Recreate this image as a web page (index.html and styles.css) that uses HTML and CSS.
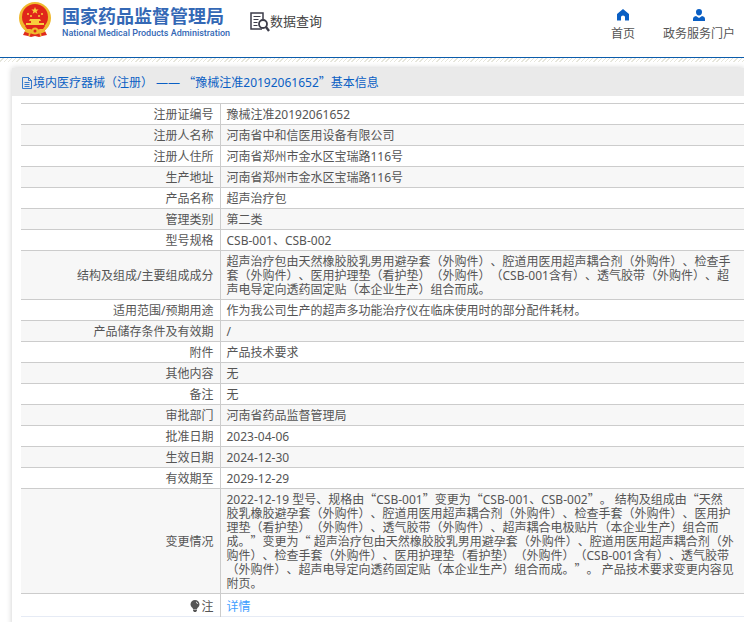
FILE: index.html
```html
<!DOCTYPE html>
<html lang="zh-CN">
	<head>
		<meta charset="UTF-8">
		<title>数据查询</title>
		<link rel="stylesheet" href="styles.css">
	</head>
	<body>
		<!--头部-->
		<header class="header">
			<a class="logo" href="#">
				<svg class="emblem" viewBox="0 0 32 36">
					<path d="M7 27L4 33l5 1 3 1 4-1 4 1 3-1 5-1-3-6z" fill="#e02a1c"/>
					<circle cx="16" cy="16" r="16" fill="#f0b92f"/>
					<circle cx="16" cy="15" r="13" fill="#e0261b"/>
					<path d="M16 5l1 2.500h2.600l-2 1.700.8 2.600L16 10.300l-2.400 1.500.8-2.600-2-1.700H15z" fill="#f8cf3c"/>
					<g fill="#f8cf3c"><circle cx="9" cy="12" r="1"/><circle cx="12" cy="14" r="1"/><circle cx="20" cy="14" r="1"/><circle cx="23" cy="12" r="1"/></g>
					<path d="M11 17h10l1 2h-2v2h5v2H7v-2h5v-2h-2z" fill="#f8cf3c"/>
					<path d="M6 24h20l-2 3H8z" fill="#e0261b"/>
					<circle cx="16" cy="29" r="3.500" fill="#f0b92f"/>
					<circle cx="16" cy="29" r="1.500" fill="#e0261b"/>
					<path d="M6 29l5 2-1 3M26 29l-5 2 1 3" fill="none" stroke="#f0b92f" stroke-width="1.500"/>
				</svg>
				<span class="logo-text">
					<strong>国家药品监督管理局</strong>
					<span class="en">National Medical Products Administration</span>
				</span>
			</a>
			<a class="search-title" href="#">
				<svg class="icon-data" viewBox="0 0 20 20" fill="none" stroke="#3d3d4a">
					<path d="M12 17H1V1h12v6" stroke-width="1.500"/>
					<path d="M3.500 4.500h7M3.500 7.500h5M3.500 10.500h4M3.500 13.500h4" stroke-width="1.200"/>
					<circle cx="13" cy="12" r="4" stroke-width="1.800"/>
					<path d="M16 15l3 4" stroke-width="2.400"/>
				</svg>
				<span>数据查询</span>
			</a>
			<nav class="nav">
				<a href="#">
					<svg viewBox="0 0 12 12"><path d="M6 0L0 5v6.500h4V8q0-1.500 2-1.500T8 8v3.500h4V5z" fill="#0a5fc4"/></svg>
					首页
				</a>
				<a href="#">
					<svg viewBox="0 0 12 12"><path d="M6 0a3 3 0 0 1 3 3c0 2-1.200 3.500-3 3.500S3 5 3 3a3 3 0 0 1 3-3zM3 7l3 2 3-2q3 .5 3 3v2H0v-2q0-2.500 3-3z" fill="#0a5fc4"/></svg>
					政务服务门户
				</a>
			</nav>
		</header>
		<div class="stripe"></div>

		<!--详情-->
		<main class="panel">
			<h1 class="panel-title">
				<svg class="icon-doc" viewBox="0 0 12 12" fill="none" stroke="#0a5fc4"><path d="M1.500.5h6l3 3v8h-9zM7.500.5v3h3M3.500 5.500h5M3.500 7.500h5M3.500 9.500h5" stroke-width=".8"/></svg>
				<span>境内医疗器械（注册） —— <q>豫械注准20192061652</q>基本信息</span>
			</h1>
			<table class="info">
				<tbody>
					<tr><th scope="row">注册证编号</th><td>豫械注准20192061652</td></tr>
					<tr><th scope="row">注册人名称</th><td>河南省中和信医用设备有限公司</td></tr>
					<tr><th scope="row">注册人住所</th><td>河南省郑州市金水区宝瑞路116号</td></tr>
					<tr><th scope="row">生产地址</th><td>河南省郑州市金水区宝瑞路116号</td></tr>
					<tr><th scope="row">产品名称</th><td>超声治疗包</td></tr>
					<tr><th scope="row">管理类别</th><td>第二类</td></tr>
					<tr><th scope="row">型号规格</th><td>CSB-001、CSB-002</td></tr>
					<tr><th scope="row">结构及组成/主要组成成分</th><td>超声治疗包由天然橡胶胶乳男用避孕套（外购件）、腔道用医用超声耦合剂（外购件）、检查手套（外购件）、医用护理垫（看护垫）（外购件）（CSB-001含有）、透气胶带（外购件）、超声电导定向透药固定贴（本企业生产）组合而成。</td></tr>
					<tr><th scope="row">适用范围/预期用途</th><td>作为我公司生产的超声多功能治疗仪在临床使用时的部分配件耗材。</td></tr>
					<tr><th scope="row">产品储存条件及有效期</th><td>/</td></tr>
					<tr><th scope="row">附件</th><td>产品技术要求</td></tr>
					<tr><th scope="row">其他内容</th><td>无</td></tr>
					<tr><th scope="row">备注</th><td>无</td></tr>
					<tr><th scope="row">审批部门</th><td>河南省药品监督管理局</td></tr>
					<tr><th scope="row">批准日期</th><td>2023-04-06</td></tr>
					<tr><th scope="row">生效日期</th><td>2024-12-30</td></tr>
					<tr><th scope="row">有效期至</th><td>2029-12-29</td></tr>
					<tr><th scope="row">变更情况</th><td>2022-12-19 型号、规格由<q>CSB-001</q>变更为<q>CSB-001、CSB-002</q>。 结构及组成由<q>天然<br>胶乳橡胶避孕套（外购件）、腔道用医用超声耦合剂（外购件）、检查手套（外购件）、医用护理垫（看护垫）（外购件）、透气胶带（外购件）、超声耦合电极贴片（本企业生产）组合而成。</q>变更为<q> 超声治疗包由天然橡胶胶乳男用避孕套（外购件）、腔道用医用超声耦合剂（外购件）、检查手套（外购件）、医用护理垫（看护垫）（外购件）（CSB-001含有）、透气胶带（外购件）、超声电导定向透药固定贴（本企业生产）组合而成。</q>。 产品技术要求变更内容见附页。</td></tr>
					<tr class="note">
						<th scope="row"><svg class="icon-bulb" viewBox="0 0 10 12"><path d="M5 0a4.500 4.500 0 0 1 4.500 4.500C9.500 7 7 7.500 7 9H3C3 7.500.5 7 .5 4.500A4.500 4.500 0 0 1 5 0zM3 9.500h4v1L6 12H4l-1-1.500z" fill="#555"/><path d="M6 2q1.500.5 1.500 2" fill="none" stroke="#fff" stroke-width=".8"/></svg>注</th>
						<td><a href="#">详情</a></td>
					</tr>
				</tbody>
			</table>
		</main>
	</body>
</html>
```
FILE: styles.css
```css
* {
	margin: 0;
	padding: 0;
	box-sizing: border-box;
}

body {
	font: 12px/14px "Noto Sans", "Noto Sans CJK SC", sans-serif;
	color: #555;
	background-color: #fff;
	text-spacing-trim: space-all;
	overflow-x: hidden;
}

a {
	color: inherit;
	text-decoration: none;
}

svg {
	flex: none;
}

.header {
	display: flex;
	align-items: flex-start;
	height: 58px;
	padding: 2px 9px 0 19px;
	border-bottom: 1px solid #0b5cab;
}

.logo {
	display: flex;
	gap: 11px;
	color: #3468b5;
}

.emblem {
	width: 32px;
	height: 36px;
}

.logo-text {
	display: flex;
	flex-direction: column;
	padding-top: 4px;
	white-space: nowrap;
}

.logo-text strong {
	font-size: 18px;
	line-height: 20px;
}

.logo-text .en {
	font: 500 9px/14px Roboto, sans-serif;
}

.search-title {
	display: flex;
	align-items: flex-start;
	margin: 10px 0 0 20px;
	font-size: 13px;
	line-height: 18px;
	color: #444;
}

.icon-data {
	width: 20px;
	height: 20px;
}

.nav {
	display: flex;
	gap: 28px;
	margin-left: auto;
	padding-top: 7px;
}

.nav a {
	display: flex;
	flex-direction: column;
	align-items: center;
	gap: 6px;
	white-space: nowrap;
}

.nav svg {
	width: 12px;
	height: 12px;
}

.stripe {
	height: 4px;
	background: repeating-linear-gradient(135deg, #fff 0, #fff 2px, #e6e6dc 2px, #e6e6dc 3px);
}

.panel {
	margin: 6px 0 0 12px;
	padding-bottom: 10px;
	box-shadow: 0 0 6px rgba(0, 0, 0, .2);
}

.panel-title {
	display: flex;
	align-items: center;
	height: 28px;
	padding: 1px 0 0 9px;
	font-size: 12px;
	font-weight: normal;
	color: #0a5fc4;
	background-color: #eaeaea;
}

.icon-doc {
	width: 12px;
	height: 12px;
}

q {
	quotes: "“" "”";
}

q::before,
q::after {
	font-family: "Noto Sans CJK SC", sans-serif;
	line-height: 1px;
}

.info {
	width: calc(100% - 9px);
	margin: 7px 0 0 9px;
	border-collapse: collapse;
}

.info tr {
	border-top: 1px solid #ccc;
}

.info tr:nth-child(even) {
	background-color: #f7f7f7;
}

.info th,
.info td {
	padding: 4px 6px 2px;
}

.info th {
	width: 199px;
	font-weight: normal;
	text-align: right;
	border-right: 1px solid #ccc;
}

.info .note {
	border-bottom: 1px solid #e6ebf5;
}

.info .note th,
.info .note td {
	padding-top: 6px;
}

.note a {
	color: #409eff;
}

.icon-bulb {
	width: 10px;
	height: 12px;
	margin-right: 1px;
	vertical-align: -1px;
}
```
